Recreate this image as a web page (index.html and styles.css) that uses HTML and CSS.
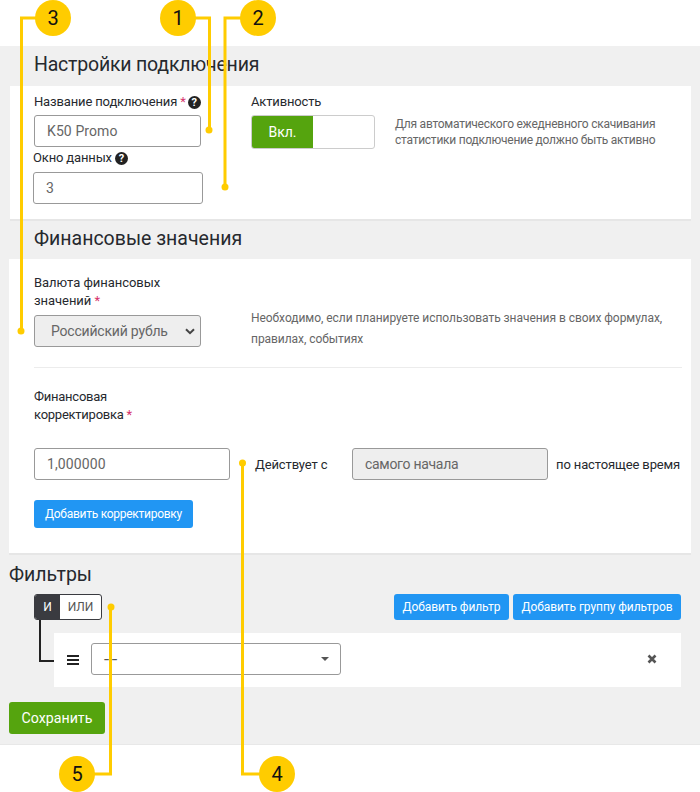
FILE: index.html
```html
<!DOCTYPE html>
<html lang="ru">
<head>
<meta charset="utf-8">
<title>Настройки подключения</title>
<link rel="stylesheet" href="styles.css">
</head>
<body>
<main class="panel">
  <h2 class="title title-inset title-conn">Настройки подключения</h2>
  <section class="card card-conn">
    <div class="conn-left">
      <label class="label">Название подключения <span class="req">*</span> <span class="help">?</span></label>
      <div class="input input-name">K50 Promo</div>
      <label class="label label-window">Окно данных <span class="help">?</span></label>
      <div class="input input-window">3</div>
    </div>
    <div class="conn-right">
      <label class="label">Активность</label>
      <div class="active-row">
        <div class="switch"><span class="switch-on">Вкл.</span></div>
        <p class="hint hint-conn">Для автоматического ежедневного скачивания статистики подключение должно быть активно</p>
      </div>
    </div>
  </section>

  <h2 class="title title-inset title-fin">Финансовые значения</h2>
  <section class="card card-fin">
    <div class="fin-top">
      <div class="fin-currency">
        <label class="label label-two">Валюта финансовых значений <span class="req">*</span></label>
        <div class="select-wrap">
          <select class="native-select" disabled><option>Российский рубль</option></select>
          <svg class="chevron" width="10" height="7" viewBox="0 0 10 7"><path d="M1 1.200l4 4 4-4" fill="none" stroke="#444" stroke-width="2"/></svg>
        </div>
      </div>
      <p class="hint hint-fin">Необходимо, если планируете использовать значения в своих формулах, правилах, событиях</p>
    </div>
    <hr class="divider">
    <label class="label label-two label-corr">Финансовая корректировка <span class="req">*</span></label>
    <div class="corr-row">
      <div class="input input-corr">1,000000</div>
      <span class="corr-text corr-from">Действует с</span>
      <div class="input input-disabled">самого начала</div>
      <span class="corr-text">по настоящее время</span>
    </div>
    <button class="btn btn-corr" type="button">Добавить корректировку</button>
  </section>

  <h2 class="title title-filters">Фильтры</h2>
  <div class="filter-bar">
    <div class="logic"><span class="logic-and">И</span><span class="logic-or">ИЛИ</span></div>
    <div class="filter-actions">
      <button class="btn btn-filter" type="button">Добавить фильтр</button>
      <button class="btn btn-group" type="button">Добавить группу фильтров</button>
    </div>
  </div>
  <div class="filter-row">
    <span class="connector"></span>
    <span class="burger"><i></i><i></i><i></i></span>
    <div class="fake-select"><span class="fake-value">---</span><span class="caret"></span></div>
    <svg class="remove" width="10" height="10" viewBox="0 0 10 10"><path d="M1.500 1.500l7 7M8.500 1.500l-7 7" stroke="#555" stroke-width="2.600" fill="none"/></svg>
  </div>
  <button class="btn-save" type="button">Сохранить</button>
</main>

<svg class="callouts" width="700" height="792" viewBox="0 0 700 792">
  <g class="lead">
    <path d="M178 18H209.500V130"/>
    <path d="M258 18H225V187"/>
    <path d="M53 18H21.500V331"/>
    <path d="M277 774H242.500V463"/>
    <path d="M76 774H110.500V607"/>
  </g>
  <g class="dots">
    <circle cx="209" cy="130" r="3.500"/>
    <circle cx="225" cy="187" r="3.500"/>
    <circle cx="21" cy="331" r="3.500"/>
    <circle cx="242.500" cy="463" r="3.500"/>
    <circle cx="111" cy="607" r="3.500"/>
    <circle cx="178" cy="18" r="18"/>
    <circle cx="258" cy="18" r="18"/>
    <circle cx="53" cy="18" r="18"/>
    <circle cx="277" cy="774" r="18"/>
    <circle cx="77" cy="774" r="18"/>
  </g>
  <g class="nums">
    <text x="178" y="25">1</text>
    <text x="258" y="25">2</text>
    <text x="53" y="25">3</text>
    <text x="277" y="781">4</text>
    <text x="77" y="781">5</text>
  </g>
</svg>
</body>
</html>
```

FILE: styles.css
```css
* { box-sizing: border-box; }
html, body { margin: 0; padding: 0; }
body {
  position: relative;
  width: 700px;
  height: 792px;
  overflow: hidden;
  background: #fff;
  font-family: Roboto, "Liberation Sans", sans-serif;
  color: #222;
  padding-top: 46px;
}
.panel {
  height: 699px;
  background: #f0f0f0;
  border-bottom: 1px solid #e8e8e8;
  display: flex;
  flex-direction: column;
  align-items: flex-start;
}
.title {
  margin: 0;
  font-size: 19.500px;
  font-weight: 400;
  line-height: 24px;
  color: #26292e;
}
.title-inset { margin-left: 34px; margin-top: 7px; height: 33px; }
.title-conn { letter-spacing: -0.2px; }
.title-fin { margin-top: 8px; height: 32px; }
.title-filters { margin: 10px 0 0 9px; height: 32px; }
.card {
  background: #fff;
  box-shadow: 0 2px 0 #e6e6e6;
  margin-left: 10px;
  width: 681px;
}
.card-conn {
  height: 133px;
  padding: 7px 0 0 24px;
  display: flex;
}
.conn-left { width: 217px; display: flex; flex-direction: column; align-items: flex-start; }
.conn-right { display: flex; flex-direction: column; }
.label { display: block; font-size: 13px; line-height: 18px; color: #26292e; letter-spacing: -0.15px; }
.req { color: #d6336c; }
.help {
  display: inline-block;
  width: 13px;
  height: 13px;
  margin-left: -1px;
  border-radius: 50%;
  background: #222;
  color: #fff;
  font-size: 11px;
  font-weight: 700;
  line-height: 13px;
  text-align: center;
  letter-spacing: 0;
  vertical-align: 0;
}
.input {
  height: 32px;
  border: 1px solid #999;
  border-radius: 3px;
  background: #fff;
  font-size: 14px;
  line-height: 30px;
  color: #666;
  padding-left: 12px;
  letter-spacing: 0.1px;
}
.input-name { width: 167px; margin-top: 4px; }
.label-window { margin: 3px 0 0 -1px; line-height: 16px; }
.label-window .help { margin-left: 0; }
.input-window { width: 170px; margin: 6px 0 0 -1px; }
.active-row { display: flex; margin-top: 4px; }
.switch {
  width: 124px;
  height: 34px;
  border: 1px solid #ccc;
  border-radius: 3px;
  background: #fff;
  overflow: hidden;
}
.switch-on {
  display: block;
  width: 61px;
  height: 32px;
  background: #55a40e;
  color: #fff;
  font-size: 14px;
  font-weight: 400;
  line-height: 32px;
  text-align: center;
}
.hint { margin: 0; font-size: 12px; color: #666; }
.hint-conn { width: 280px; margin: 0 0 0 20px; padding-top: 1px; line-height: 16px; letter-spacing: -0.25px; }
.card-fin {
  margin-left: 9px;
  width: 682px;
  height: 294px;
  padding: 15px 9px 0 25px;
  display: flex;
  flex-direction: column;
  align-items: flex-start;
}
.fin-top { display: flex; align-items: flex-end; }
.fin-currency { width: 217px; }
.label-two { width: 150px; letter-spacing: -0.05px; }
.select-wrap { position: relative; margin-top: 5px; width: 167px; }
.native-select {
  display: block;
  appearance: none;
  width: 167px;
  height: 32px;
  border: 1px solid #999;
  border-radius: 3px;
  background-color: #eee;
  color: #666;
  opacity: 1;
  font-family: inherit;
  font-size: 14px;
  padding-left: 16px;
  letter-spacing: -0.2px;
}
.chevron { position: absolute; right: 6px; top: 13px; }
.hint-fin { width: 430px; line-height: 21px; margin-bottom: -3px; letter-spacing: -0.05px; }
.divider {
  align-self: stretch;
  margin: 20px 0 0;
  border: 0;
  border-top: 1px solid #ececec;
  width: 648px;
}
.label-corr { margin-top: 20px; letter-spacing: -0.25px; }
.corr-row { display: flex; align-items: center; margin-top: 24px; }
.input-corr { width: 196px; }
.corr-text { font-size: 13px; color: #26292e; white-space: nowrap; letter-spacing: -0.12px; }
.corr-from { margin-left: 25px; width: 97px; }
.input-disabled { width: 196px; background: #eee; margin-right: 8px; letter-spacing: -0.3px; }
.btn {
  height: 26px;
  border: 0;
  border-radius: 3px;
  background: #2196f3;
  color: #fff;
  font-family: inherit;
  font-size: 12px;
  font-weight: 400;
  padding: 0;
  white-space: nowrap;
}
.btn-corr { height: 28px; margin-top: 20px; width: 159px; letter-spacing: -0.27px; }
.btn-filter { width: 115px; letter-spacing: -0.1px; }
.btn-group { width: 168px; letter-spacing: -0.08px; }
.filter-bar {
  display: flex;
  justify-content: space-between;
  margin-left: 34px;
  width: 647px;
  margin-top: -1px;
}
.logic {
  display: flex;
  width: 68px;
  height: 26px;
  border: 1px solid #3a3b40;
  border-radius: 3px;
  background: #fff;
  overflow: hidden;
  font-size: 12px;
  line-height: 24px;
  text-align: center;
}
.logic-and { width: 25px; background: #3a3b40; color: #fff; }
.logic-or { flex: 1; color: #555; }
.filter-actions { display: flex; gap: 4px; }
.filter-row {
  position: relative;
  display: flex;
  align-items: center;
  margin: 13px 0 0 54px;
  width: 627px;
  height: 54px;
  background: #fff;
  padding-left: 13px;
}
.connector {
  position: absolute;
  left: -15px;
  top: -13px;
  width: 15px;
  height: 42px;
  border-left: 2px solid #222;
  border-bottom: 2px solid #222;
}
.burger { display: flex; flex-direction: column; gap: 2px; width: 12px; margin-right: 12px; }
.burger i { display: block; height: 2px; background: #222; }
.fake-select {
  position: relative;
  width: 250px;
  height: 32px;
  margin-bottom: 2px;
  border: 1px solid #999;
  border-radius: 3px;
  font-size: 17px;
  letter-spacing: -0.5px;
  line-height: 30px;
  color: #555;
  padding-left: 12px;
}
.caret {
  position: absolute;
  right: 11px;
  top: 13px;
  border-left: 4px solid transparent;
  border-right: 4px solid transparent;
  border-top: 4px solid #555;
}
.remove { margin-left: 306px; margin-top: -2px; }
.btn-save {
  margin: 15px 0 0 9px;
  width: 96px;
  height: 32px;
  border: 0;
  border-radius: 3px;
  background: #55a40e;
  color: #fff;
  font-family: inherit;
  font-size: 14.200px;
  font-weight: 400;
}
.callouts { position: absolute; left: 0; top: 0; pointer-events: none; }
.lead path { fill: none; stroke: #fc0; stroke-width: 3; }
.dots circle { fill: #fc0; }
.nums text {
  font-family: Roboto, "Liberation Sans", sans-serif;
  font-size: 20px;
  fill: #111;
  text-anchor: middle;
}
```
